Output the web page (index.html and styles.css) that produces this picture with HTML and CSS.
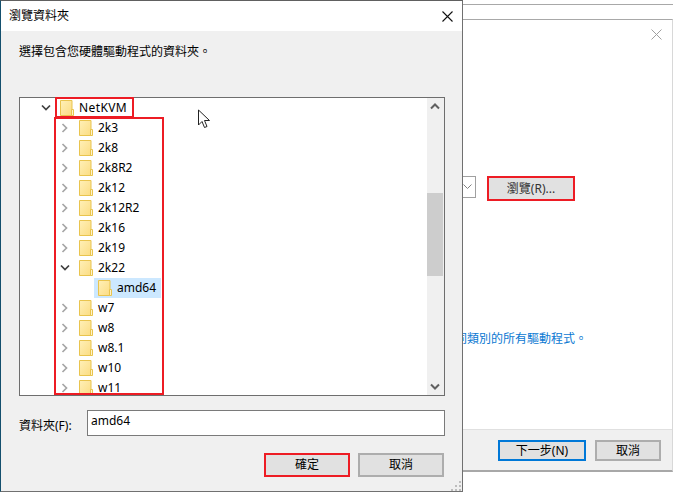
FILE: index.html
```html
<!DOCTYPE html>
<html lang="zh-Hant">
<head>
<meta charset="utf-8">
<title>瀏覽資料夾</title>
<link rel="stylesheet" href="styles.css">
</head>
<body>
<svg class="defs" width="0" height="0" aria-hidden="true">
  <defs>
    <linearGradient id="fg" x1="0" y1="0" x2="1" y2="1">
      <stop offset="0" stop-color="#fff0b8"/>
      <stop offset="1" stop-color="#fbdc83"/>
    </linearGradient>
    <symbol id="folder" viewBox="0 0 14 16">
      <path d="M.5.5h11.500v15H.5z" fill="url(#fg)" stroke="#e9c44e"/>
      <path d="M11.500 9.500h2v6h-2z" fill="#fff3c8" stroke="#e9c44e"/>
    </symbol>
    <symbol id="closed" viewBox="0 0 8 10">
      <path d="M1.500 1l4 4-4 4" fill="none" stroke="#a6a6a6" stroke-width="1.700"/>
    </symbol>
    <symbol id="open" viewBox="0 0 10 8">
      <path d="M1 1.500l4 4 4-4" fill="none" stroke="#404040" stroke-width="1.700"/>
    </symbol>
  </defs>
</svg>

<div class="backdrop-line"></div>

<section class="wizard">
  <div class="wizard-main">
    <svg class="wizard-close" width="11" height="11" viewBox="0 0 11 11"><path d="M.5.500l10 10M10.500.500l-10 10" stroke="#a0a0a0" fill="none"/></svg>
    <div class="browse-row">
      <div class="combo-end"><svg width="9" height="6" viewBox="0 0 9 6"><path d="M.5.500l4 4 4-4" fill="none" stroke="#808080"/></svg></div>
      <button class="btn browse-btn">瀏覽(R)...</button>
    </div>
    <p class="wizard-link">同類別的所有驅動程式。</p>
  </div>
  <div class="wizard-footer">
    <button class="btn next-btn">下一步(N)</button>
    <button class="btn wizard-cancel">取消</button>
  </div>
</section>

<section class="dialog">
  <header class="titlebar">
    <span>瀏覽資料夾</span>
    <svg class="close" width="11" height="11" viewBox="0 0 11 11"><path d="M.5.500l10 10M10.500.500l-10 10" stroke="#111" stroke-width="1.100" fill="none"/></svg>
  </header>
  <div class="content">
    <p class="prompt">選擇包含您硬體驅動程式的資料夾。</p>
    <div class="tree">
      <ul class="rows">
        <li class="row lv0"><svg class="chev-o"><use href="#open"/></svg><svg class="fold"><use href="#folder"/></svg><span class="root-name">NetKVM</span></li>
        <li class="row lv1"><svg class="chev-c"><use href="#closed"/></svg><svg class="fold"><use href="#folder"/></svg><span>2k3</span></li>
        <li class="row lv1"><svg class="chev-c"><use href="#closed"/></svg><svg class="fold"><use href="#folder"/></svg><span>2k8</span></li>
        <li class="row lv1"><svg class="chev-c"><use href="#closed"/></svg><svg class="fold"><use href="#folder"/></svg><span>2k8R2</span></li>
        <li class="row lv1"><svg class="chev-c"><use href="#closed"/></svg><svg class="fold"><use href="#folder"/></svg><span>2k12</span></li>
        <li class="row lv1"><svg class="chev-c"><use href="#closed"/></svg><svg class="fold"><use href="#folder"/></svg><span>2k12R2</span></li>
        <li class="row lv1"><svg class="chev-c"><use href="#closed"/></svg><svg class="fold"><use href="#folder"/></svg><span>2k16</span></li>
        <li class="row lv1"><svg class="chev-c"><use href="#closed"/></svg><svg class="fold"><use href="#folder"/></svg><span>2k19</span></li>
        <li class="row lv1"><svg class="chev-o"><use href="#open"/></svg><svg class="fold"><use href="#folder"/></svg><span>2k22</span></li>
        <li class="row lv2"><div class="selected"><svg class="fold"><use href="#folder"/></svg><span>amd64</span></div></li>
        <li class="row lv1"><svg class="chev-c"><use href="#closed"/></svg><svg class="fold"><use href="#folder"/></svg><span>w7</span></li>
        <li class="row lv1"><svg class="chev-c"><use href="#closed"/></svg><svg class="fold"><use href="#folder"/></svg><span>w8</span></li>
        <li class="row lv1"><svg class="chev-c"><use href="#closed"/></svg><svg class="fold"><use href="#folder"/></svg><span>w8.1</span></li>
        <li class="row lv1"><svg class="chev-c"><use href="#closed"/></svg><svg class="fold"><use href="#folder"/></svg><span>w10</span></li>
        <li class="row lv1"><svg class="chev-c"><use href="#closed"/></svg><svg class="fold"><use href="#folder"/></svg><span>w11</span></li>
      </ul>
      <div class="scrollbar">
        <svg class="arrow" width="16" height="17" viewBox="0 0 16 17"><path d="M4 10.500l4-4 4 4" fill="none" stroke="#606060" stroke-width="2"/></svg>
        <div class="track"><div class="thumb"></div></div>
        <svg class="arrow" width="16" height="17" viewBox="0 0 16 17"><path d="M4 6.500l4 4 4-4" fill="none" stroke="#606060" stroke-width="2"/></svg>
      </div>
    </div>
    <div class="folder-row">
      <label class="folder-label">資料夾(F):</label>
      <div class="folder-input">amd64</div>
    </div>
    <div class="actions">
      <button class="btn ok-btn">確定</button>
      <button class="btn cancel-btn">取消</button>
    </div>
    <svg class="grip" width="12" height="12" viewBox="-1 -2 12 12"><path d="M8 0h2v2H8zM4 4h2v2H4zM8 4h2v2H8zM0 8h2v2H0zM4 8h2v2H4zM8 8h2v2H8z" fill="#bdbdbd"/></svg>
  </div>
</section>

<div class="mark mark-root"></div>
<div class="mark mark-list"></div>

<svg class="cursor" width="14" height="20" viewBox="0 0 14 20"><path d="M1.500 1v15l3.500-3.500 2.500 6 2.500-1-2.500-6h5z" fill="#fff" stroke="#222"/></svg>
</body>
</html>
```
FILE: styles.css
```css
* { box-sizing: border-box; }
html, body { margin: 0; padding: 0; }
body {
  position: relative;
  width: 673px;
  height: 492px;
  overflow: hidden;
  background: #fff;
  font: 12px/16px "Noto Sans", "Noto Sans CJK TC", sans-serif;
  color: #000;
}
.defs { position: absolute; }
ul, p { margin: 0; padding: 0; list-style: none; }
.btn {
  display: block;
  margin: 0;
  padding: 0;
  font: inherit;
  color: #000;
  background: #e1e1e1;
  border: 1px solid #adadad;
  border-radius: 0;
}

.backdrop-line {
  position: absolute;
  left: 462px;
  top: 4px;
  width: 211px;
  height: 1px;
  background: #a8a8a8;
}

/* background wizard window */
.wizard {
  position: absolute;
  left: 440px;
  top: 19px;
  width: 233px;
  height: 453px;
  display: flex;
  flex-direction: column;
  background: #fff;
  border: 1px solid #a8a8a8;
  border-right-color: #d8d8d8;
  border-bottom-width: 2px;
}
.wizard-main {
  flex: 1;
  display: flex;
  flex-direction: column;
  padding: 156px 0 0 0;
  position: relative;
}
.wizard-close { position: absolute; right: 10px; top: 9px; }
.browse-row { display: flex; align-items: flex-start; }
.combo-end {
  width: 35px;
  height: 22px;
  border: 1px solid #a0a0a0;
  display: flex;
  align-items: center;
  justify-content: flex-end;
  padding-right: 3px;
}
.browse-btn {
  width: 88px;
  height: 25px;
  margin-left: 11px;
  border: 2px solid #ed1c24;
  color: #333;
}
.wizard-link {
  margin-top: 130px;
  color: #0a78d2;
  text-align: right;
  width: 146px;
  white-space: nowrap;
}
.wizard-footer {
  height: 41px;
  display: flex;
  align-items: flex-start;
  gap: 9px;
  padding: 10px 0 0 57px;
  background: #f0f0f0;
  border-top: 1px solid #e0e0e0;
}
.next-btn { width: 88px; height: 21px; border: 2px solid #0078d7; line-height: 15px; }
.wizard-cancel { width: 66px; height: 21px; border-width: 2px; line-height: 15px; }

/* foreground dialog */
.dialog {
  position: absolute;
  left: 0;
  top: 0;
  width: 463px;
  height: 492px;
  display: flex;
  flex-direction: column;
  background: #f0f0f0;
  border: 1px solid #707070;
  border-left-color: #14506e;
  border-top-color: #606060;
}
.titlebar {
  flex: none;
  height: 30px;
  display: flex;
  align-items: center;
  justify-content: space-between;
  padding: 0 9px 0 8px;
  background: #fff;
}
.content {
  flex: 1;
  position: relative;
  padding: 13px 17px 0 18px;
}
.prompt { height: 16px; }
.tree {
  margin-top: 37px;
  height: 299px;
  display: flex;
  background: #fff;
  border: 1px solid #6e6e6e;
  overflow: hidden;
}
.rows { flex: 1; min-width: 0; }
.row {
  height: 20px;
  flex: none;
  display: flex;
  align-items: center;
  white-space: nowrap;
}
.lv0 { padding-left: 21px; }
.lv1 { padding-left: 39px; }
.lv2 { padding-left: 74px; }
.chev-o { width: 10px; height: 8px; flex: none; margin-right: 9px; }
.lv1 .chev-o { margin-left: 1px; }
.chev-c { width: 8px; height: 10px; flex: none; margin: 0 10px 0 2px; }
.fold { width: 14px; height: 16px; flex: none; margin-right: 5px; }
.root-name { letter-spacing: .4px; }
.selected {
  display: flex;
  align-items: center;
  width: 67px;
  height: 20px;
  padding-left: 4px;
  background: #cce8ff;
}
.scrollbar {
  flex: none;
  width: 17px;
  display: flex;
  flex-direction: column;
  background: #f0f0f0;
}
.arrow { flex: none; display: block; }
.track { flex: 1; padding-top: 78px; }
.thumb { width: 16px; height: 83px; background: #cdcdcd; }

.folder-row {
  display: flex;
  align-items: flex-end;
  margin-top: 14px;
}
.folder-label { width: 68px; flex: none; line-height: 16px; padding-bottom: 2px; }
.folder-input {
  flex: 1;
  height: 26px;
  padding: 2px 3px;
  background: #fff;
  border: 1px solid #7a7a7a;
}
.actions {
  display: flex;
  justify-content: flex-end;
  gap: 8px;
  margin: 17px 1px 0 0;
}
.ok-btn { width: 86px; height: 24px; border: 2px solid #ed1c24; }
.cancel-btn { width: 86px; height: 24px; border-width: 2px; }
.grip { position: absolute; right: 0; bottom: 0; }

/* annotations over the screenshot */
.mark { position: absolute; border: 2px solid #ed1c24; }
.mark-root { left: 55px; top: 97px; width: 79px; height: 21px; }
.mark-list { left: 54px; top: 117px; width: 110px; height: 278px; }
.cursor { position: absolute; left: 197px; top: 109px; }
```
